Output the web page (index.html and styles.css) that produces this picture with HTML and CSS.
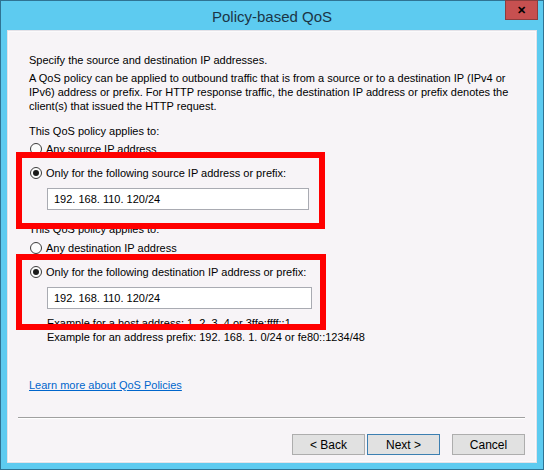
FILE: index.html
```html
<!DOCTYPE html>
<html lang="en">
<head>
  <meta charset="UTF-8" />
  <title>Policy-based QoS</title>
  <link rel="stylesheet" href="styles.css">
</head>
<body>
  <div class="window">
    <div class="titlebar">
      <span class="title">Policy-based QoS</span>
      <span class="close">&#x2715;</span>
    </div>

    <div class="content">
      <p class="line">Specify the source and destination IP addresses.</p>
      <p class="intro">A QoS policy can be applied to outbound traffic that is from a source or to a destination IP (IPv4 or<br>
        IPv6) address or prefix. For HTTP response traffic, the destination IP address or prefix denotes the<br>
        client(s) that issued the HTTP request.</p>

      <p class="line heading">This QoS policy applies to:</p>
      <div class="radio-row first"><span class="radio"></span>Any source IP address</div>
      <div class="radio-row option"><span class="radio checked"></span>Only for the following source IP address or prefix:</div>
      <div class="ipbox">192. 168. 110. 120/24</div>

      <p class="line heading second">This QoS policy applies to:</p>
      <div class="radio-row first tight"><span class="radio"></span>Any destination IP address</div>
      <div class="radio-row option"><span class="radio checked"></span>Only for the following destination IP address or prefix:</div>
      <div class="ipbox wide">192. 168. 110. 120/24</div>
      <p class="line example">Example for a host address: 1. 2. 3. 4 or 3ffe:ffff::1</p>
      <p class="line example">Example for an address prefix: 192. 168. 1. 0/24 or fe80::1234/48</p>

      <a class="learn" href="#">Learn more about QoS Policies</a>

      <div class="footer">
        <hr class="separator" />
        <div class="buttons">
          <button class="btn">&lt; Back</button>
          <button class="btn default">Next &gt;</button>
          <button class="btn cancel">Cancel</button>
        </div>
      </div>

      <div class="mark mark-source"></div>
      <div class="mark mark-dest"></div>
    </div>
  </div>
</body>
</html>
```

FILE: styles.css
```css
body {
  margin: 0;
  font-family: 'Liberation Sans', Arial, sans-serif;
  font-size: 11px;
  color: #000;
}

.window {
  width: 544px;
  height: 470px;
  box-sizing: border-box;
  border: 1px solid #2f7393;
  background-color: #5dcbf0;
  display: flex;
  flex-direction: column;
}

.titlebar {
  height: 29px;
  position: relative;
  display: flex;
  justify-content: center;
  align-items: center;
}

.title {
  font-size: 15px;
  color: #1b3546;
  padding-top: 1px;
}

.close {
  position: absolute;
  top: -1px;
  right: 5px;
  width: 33px;
  height: 20px;
  box-sizing: border-box;
  background-color: #c75050;
  border: 1px solid #8d3d3d;
  color: #000;
  font-size: 11px;
  font-weight: bold;
  display: flex;
  justify-content: center;
  align-items: center;
}

.content {
  flex: 1;
  margin: 0 6px 6px 6px;
  background-color: #f7f4f7;
  border: 1px solid #e4e2e8;
  box-shadow: inset 0 0 0 1px #fbfafc;
  padding: 22px 0 0 21px;
  position: relative;
  display: flex;
  flex-direction: column;
}

p {
  margin: 0;
}

.line,
.intro,
.radio-row {
  line-height: 14px;
}

.intro {
  margin-top: 4px;
}

.heading {
  margin-top: 11px;
}

.heading.second {
  margin-top: 12px;
}

.radio-row {
  display: flex;
  align-items: center;
  margin-left: 1px;
}

.radio-row.first {
  margin-top: 4px;
}

.radio-row.tight {
  margin-top: 5px;
}

.radio-row.option {
  margin-top: 10px;
}

.radio {
  width: 12px;
  height: 12px;
  box-sizing: border-box;
  border: 1px solid #3c3c3c;
  border-radius: 50%;
  background-color: #fcfcfc;
  margin-right: 4px;
  display: flex;
  justify-content: center;
  align-items: center;
}

.radio.checked::after {
  content: "";
  width: 6px;
  height: 6px;
  border-radius: 50%;
  background-color: #1a1a1a;
}

.ipbox {
  margin: 8px 0 0 18px;
  width: 262px;
  height: 22px;
  box-sizing: border-box;
  border: 1px solid #a9abb2;
  background-color: #fff;
  padding-left: 6px;
  line-height: 20px;
}

.ipbox.wide {
  width: 265px;
}

.example {
  margin-left: 18px;
}

.ipbox + .example {
  margin-top: 7px;
}

.learn {
  margin-top: 34px;
  align-self: flex-start;
  color: #0066cc;
  line-height: 14px;
}

.footer {
  margin-top: auto;
  margin-left: -11px;
  margin-right: 11px;
  padding-bottom: 7px;
}

.separator {
  margin: 0;
  border: none;
  border-top: 1px solid #a0a0a0;
  border-bottom: 1px solid #fff;
}

.buttons {
  display: flex;
  justify-content: flex-end;
  margin-top: 15px;
}

.btn {
  width: 73px;
  height: 21px;
  box-sizing: border-box;
  margin-left: 2px;
  border: 1px solid #adadad;
  background-color: #e1e1e1;
  font-family: inherit;
  font-size: 12px;
  color: #000;
  padding: 0;
}

.btn.default {
  border-color: #3c7fb1;
}

.btn.cancel {
  margin-left: 12px;
}

.mark {
  position: absolute;
  border: 6px solid #ff0000;
  box-sizing: border-box;
}

.mark-source {
  left: 8px;
  top: 121px;
  width: 309px;
  height: 77px;
}

.mark-dest {
  left: 8px;
  top: 223px;
  width: 310px;
  height: 76px;
}
```
